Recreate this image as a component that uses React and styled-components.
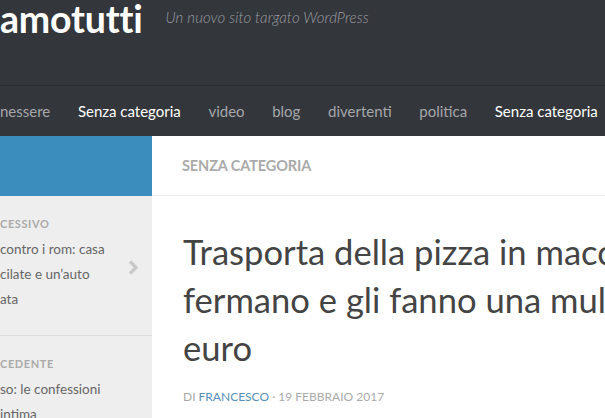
import React from "react";
import styled, { createGlobalStyle } from "styled-components";

const GlobalStyle = createGlobalStyle`
  html, body {
    margin: 0;
    padding: 0;
    background: #ffffff;
    overflow: hidden;
  }
  body {
    font-family: "Lato", "Noto Sans", sans-serif;
  }
`;

const Header = styled.header`
  height: 85px;
  background: #33363b;
  border-bottom: 1px solid #2a2c30;
  display: flex;
  align-items: flex-start;
  gap: 23px;
`;

const SiteTitle = styled.div`
  color: #ffffff;
  font-size: 37.5px;
  font-weight: 700;
  line-height: 37px;
  letter-spacing: -0.2px;
`;

const Tagline = styled.div`
  color: #9a9ca0;
  font-size: 15px;
  font-style: italic;
  font-weight: 300;
  line-height: 16px;
  padding-top: 9px;
  letter-spacing: 0.1px;
`;

const Nav = styled.nav`
  height: 50px;
  background: #33363b;
  display: flex;
  align-items: center;
  white-space: nowrap;
`;

const NavItem = styled.span`
  color: ${(p) => (p.$active ? "#ffffff" : "#a5a7aa")};
  font-size: 15px;
  padding: 0 13.8px;
  &:first-child {
    padding-left: 0;
  }
`;

const Body = styled.div`
  display: flex;
  height: 282px;
  overflow: hidden;
`;

const Sidebar = styled.aside`
  width: 152px;
  flex-shrink: 0;
  background: #eeeeee;
`;

const SidebarTop = styled.div`
  height: 60px;
  background: #3b8dbd;
`;

const PostNav = styled.div`
  position: relative;
  padding: 20px 0 23px;
  border-top: ${(p) => (p.$divider ? "1px solid #dddddd" : "none")};
`;

const PostNavLabel = styled.div`
  color: #aaaaaa;
  font-size: 11px;
  font-weight: 700;
  letter-spacing: 0.6px;
  text-transform: uppercase;
  line-height: 16px;
  margin-bottom: 5px;
`;

const PostNavTitle = styled.div`
  color: #666666;
  font-size: 13.5px;
  line-height: 25px;
  white-space: nowrap;
`;

const Chevron = styled.svg`
  position: absolute;
  right: 13px;
  top: 64px;
`;

const Main = styled.main`
  flex: 1;
  min-width: 0;
  overflow: hidden;
`;

const PageHead = styled.div`
  height: 59px;
  border-bottom: 1px solid #eeeeee;
  display: flex;
  align-items: center;
  padding-left: 30px;
`;

const PageHeading = styled.h2`
  margin: 0;
  color: #aaaaaa;
  font-size: 14.5px;
  font-weight: 700;
  text-transform: uppercase;
  letter-spacing: -0.1px;
`;

const Article = styled.div`
  padding: 32px 0 0 31px;
`;

const PostTitle = styled.h1`
  margin: 0;
  color: #444444;
  font-size: 34.6px;
  font-weight: 400;
  line-height: 48px;
  white-space: nowrap;
`;

const Meta = styled.div`
  margin-top: 17px;
  color: #aaaaaa;
  font-size: 12px;
  text-transform: uppercase;
  a {
    color: #5a8fb8;
    text-decoration: none;
  }
`;

export default function App() {
  return (
    <>
      <GlobalStyle />
      <Header>
        <SiteTitle>amotutti</SiteTitle>
        <Tagline>Un nuovo sito targato WordPress</Tagline>
      </Header>
      <Nav>
        <NavItem>nessere</NavItem>
        <NavItem $active>Senza categoria</NavItem>
        <NavItem>video</NavItem>
        <NavItem>blog</NavItem>
        <NavItem>divertenti</NavItem>
        <NavItem>politica</NavItem>
        <NavItem $active>Senza categoria</NavItem>
      </Nav>
      <Body>
        <Sidebar>
          <SidebarTop />
          <PostNav>
            <PostNavLabel>cessivo</PostNavLabel>
            <PostNavTitle>
              contro i rom: casa
              <br />
              cilate e un’auto
              <br />
              ata
            </PostNavTitle>
            <Chevron width="11" height="15" viewBox="0 0 11 15">
              <path d="M2 1.5 L8 7.5 L2 13.5" fill="none" stroke="#c8c8c8" strokeWidth="3.2" />
            </Chevron>
          </PostNav>
          <PostNav $divider>
            <PostNavLabel>cedente</PostNavLabel>
            <PostNavTitle>
              so: le confessioni
              <br />
              intima
            </PostNavTitle>
          </PostNav>
        </Sidebar>
        <Main>
          <PageHead>
            <PageHeading>Senza categoria</PageHeading>
          </PageHead>
          <Article>
            <PostTitle>
              Trasporta della pizza in macchina, lo
              <br />
              fermano e gli fanno una multa di 2mila
              <br />
              euro
            </PostTitle>
            <Meta>
              di <a href="#">Francesco</a> · 19 febbraio 2017
            </Meta>
          </Article>
        </Main>
      </Body>
    </>
  );
}
